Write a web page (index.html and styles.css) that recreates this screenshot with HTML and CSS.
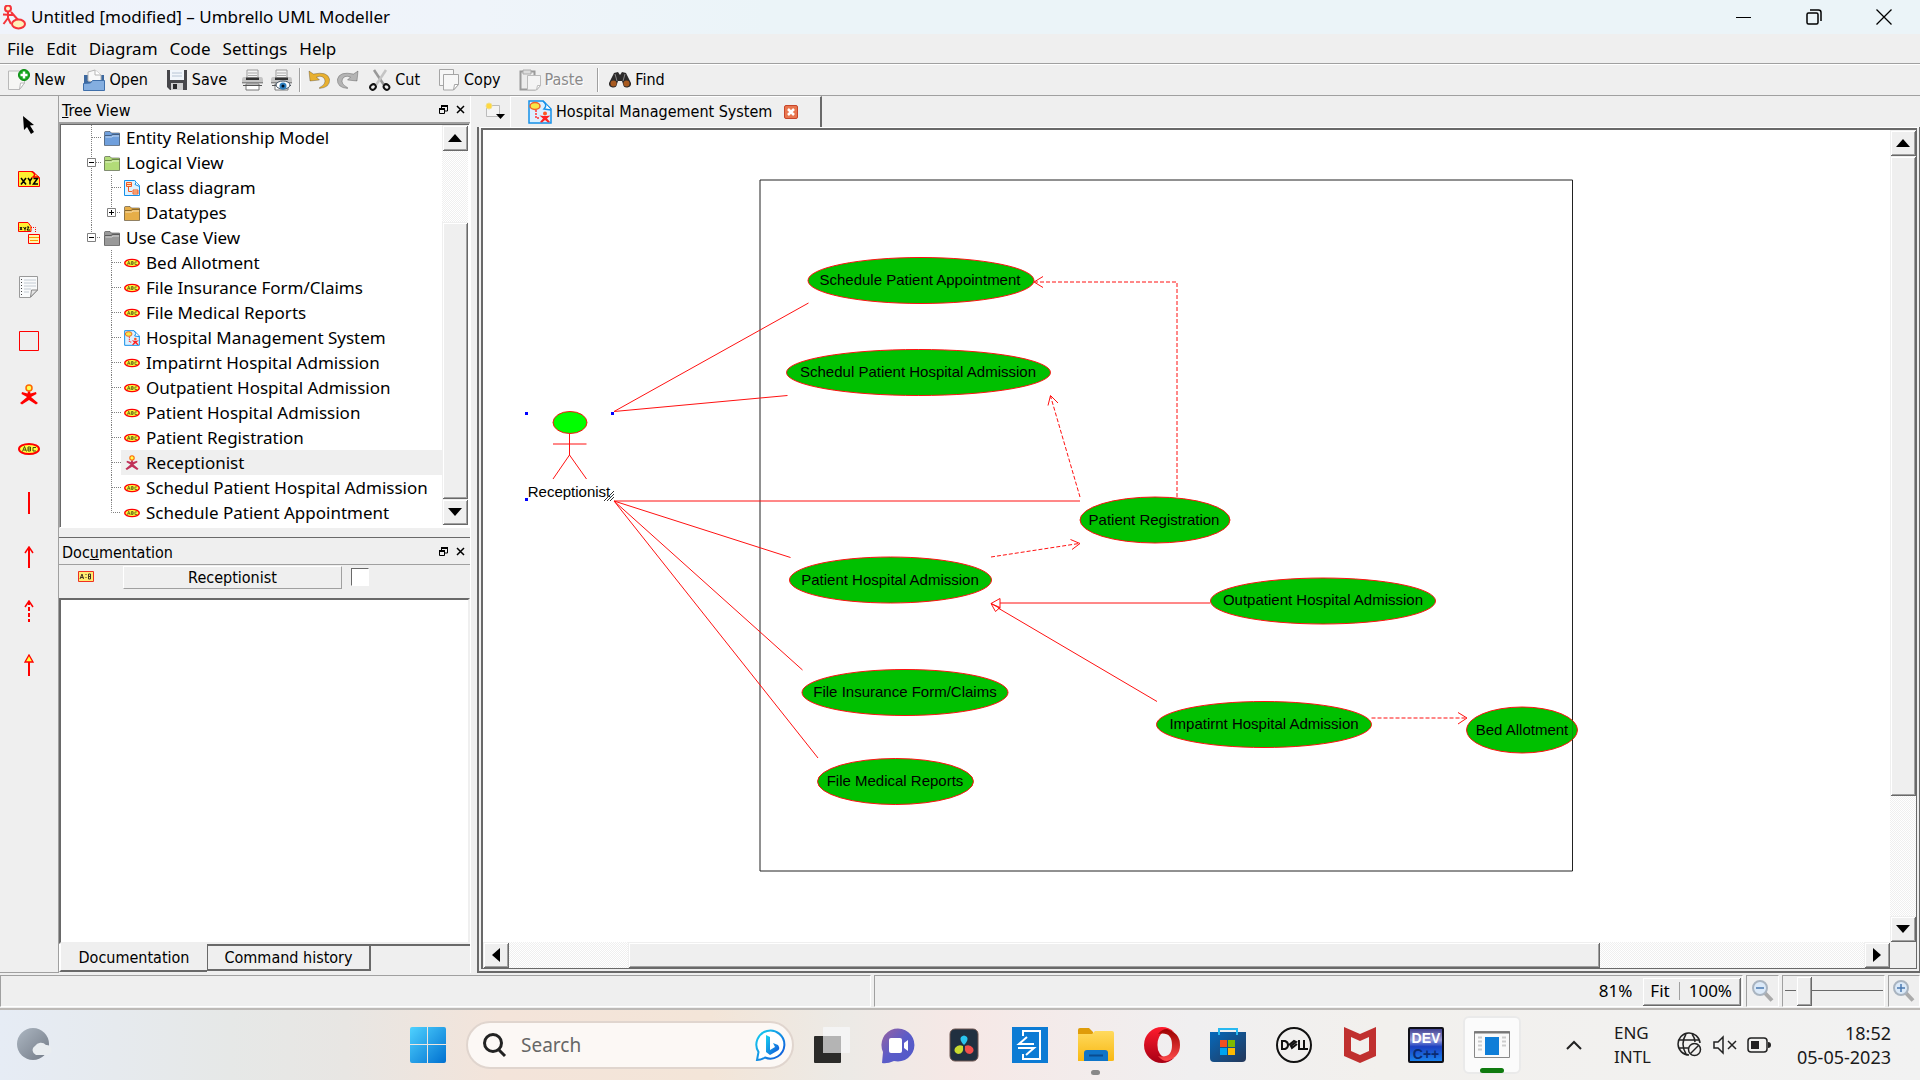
FILE: index.html
```html
<!DOCTYPE html>
<html lang="en">
<head>
<meta charset="utf-8">
<title>Untitled [modified] – Umbrello UML Modeller</title>
<link rel="stylesheet" href="styles.css">
</head>
<body>
<svg class="defs" aria-hidden="true">
  <defs>
    <linearGradient id="gWin" x1="0" y1="0" x2="1" y2="1"><stop offset="0" stop-color="#4fd2ff"/><stop offset="1" stop-color="#0070d0"/></linearGradient>
    <linearGradient id="gFolder" x1="0" y1="0" x2="0" y2="1"><stop offset="0" stop-color="#ffda5e"/><stop offset="1" stop-color="#f8b813"/></linearGradient>
    <linearGradient id="gOpera" x1="0" y1="0" x2="0" y2="1"><stop offset="0" stop-color="#ff1b2d"/><stop offset="1" stop-color="#a70014"/></linearGradient>
    <linearGradient id="gOpera2" x1="0" y1="0" x2="0" y2="1"><stop offset="0" stop-color="#9c0000"/><stop offset="1" stop-color="#ff4b4b"/></linearGradient>
    <linearGradient id="gStore" x1="0" y1="0" x2="1" y2="1"><stop offset="0" stop-color="#0669bb"/><stop offset="1" stop-color="#243759"/></linearGradient>
    <linearGradient id="gChat" x1="0" y1="0" x2="1" y2="1"><stop offset="0" stop-color="#9a62a0"/><stop offset=".5" stop-color="#5b5cc8"/><stop offset="1" stop-color="#5059c9"/></linearGradient>
    <linearGradient id="gMoon" x1="0" y1="0" x2="1" y2="1"><stop offset="0" stop-color="#adb7c2"/><stop offset="1" stop-color="#727a86"/></linearGradient>
    <linearGradient id="gBing" x1="0" y1="0" x2="1" y2="1"><stop offset="0" stop-color="#16d3f0"/><stop offset="1" stop-color="#1150d8"/></linearGradient>
    <linearGradient id="gDev" x1="0" y1="0" x2="0" y2="1"><stop offset="0" stop-color="#3a3a8c"/><stop offset=".35" stop-color="#9a9cd8"/><stop offset=".55" stop-color="#1c3fc0"/><stop offset="1" stop-color="#1a86f0"/></linearGradient>
  </defs>
  <symbol id="folder" viewBox="0 0 16 16"><path d="M.5 2.500a1 1 0 0 1 1-1h4.500l1.500 1.500h7a1 1 0 0 1 1 1V15H.5z" fill="currentColor"/><path d="M.5 5.500H7L8.500 4.500h7V15.500H.5z" fill="currentColor" stroke="#000" stroke-opacity=".4"/><path d="M1.500 7H7.500L9 6h6" stroke="#fff" stroke-opacity=".6" fill="none"/><path d="M.5 5V2.500a1 1 0 0 1 1-1h4.500l1.500 1.500h8V4.500" fill="none" stroke="#000" stroke-opacity=".4"/></symbol>
  <symbol id="usecase" viewBox="0 0 22 12"><ellipse cx="11" cy="6" rx="10" ry="5" fill="#ffff40" stroke="#f00" stroke-width="2"/><path d="M4.500 8.500L6.500 3.500 8.500 8.500M5.500 7H8M10 8V4h2.500v4zM10 6h3M18 4.500h-3v3.500h3" fill="none" stroke="#4a4a10"/></symbol>
  <symbol id="actor" viewBox="0 0 20 22"><circle cx="10" cy="4" r="3" fill="#ff5" stroke="#f60" stroke-width="1.500"/><path d="M9 7.500h2l.5 2L17 8l.5 2-5.500 3 7 6-2 1.500L10 16l-7 4.500L1 19l7-6-5.500-3L3 8l5.500 1.500z" fill="currentColor"/></symbol>
  <symbol id="classdoc" viewBox="0 0 16 16"><path d="M.5.5h10l5 5v10H.5z" fill="#dff2ff" stroke="#1590e8"/><path d="M11 .5q2 2 0 4l4.500 2" fill="#fff" stroke="#1590e8"/><path d="M2.500 2.500h5v4h-5zM9 10h5v4H9z" fill="#ffe0b0" stroke="#f05a28"/><path d="M3 4.500h4M9.500 12H14M4.500 7v4.500H8" stroke="#f05a28" fill="none"/></symbol>
  <symbol id="usedoc" viewBox="0 0 24 24"><path d="M1 1h14l8 8v14H1z" fill="#dcf0ff" stroke="#1590e8" stroke-width="1.500"/><path d="M15 1q5 4 1 8l7 1" fill="#fff" stroke="#1590e8" stroke-width="1.500"/><ellipse cx="7" cy="6" rx="5" ry="3.500" fill="#f6e84a" stroke="#f0642a" stroke-width="1.500"/><path d="M8 10v8h4" stroke="#f33" stroke-width="1.500" stroke-dasharray="2 1" fill="none"/><circle cx="17" cy="13.500" r="2" fill="#f52"/><path d="M11.500 15.500l4 .5h3l4-.5-3.500 3 3 3.500-2 .5-3-2.500-3 2.500-2-.5 3-3.500z" fill="#f22"/></symbol>
  <symbol id="line" viewBox="0 0 20 25"><path d="M10.500 0v25" class="dots"/></symbol>
  <symbol id="tee" viewBox="0 0 20 25"><path d="M10.500 0v25M11 12.500h9" class="dots"/></symbol>
  <symbol id="end" viewBox="0 0 20 25"><path d="M10.500 0v12.500h9" class="dots"/></symbol>
  <symbol id="minus" viewBox="0 0 20 25"><path d="M10.500 0v25M11 12.500h9" class="dots"/><path d="M6.500 8.500h8v8h-8z" fill="#fff" stroke="#808080"/><path d="M8 12.500h5" stroke="#000"/></symbol>
  <symbol id="minusend" viewBox="0 0 20 25"><path d="M10.500 0v12.500h9" class="dots"/><path d="M6.500 8.500h8v8h-8z" fill="#fff" stroke="#808080"/><path d="M8 12.500h5" stroke="#000"/></symbol>
  <symbol id="plus" viewBox="0 0 20 25"><path d="M10.500 0v12.500h9" class="dots"/><path d="M6.500 8.500h8v8h-8z" fill="#fff" stroke="#808080"/><path d="M8 12.500h5M10.500 10v5" stroke="#000"/></symbol>
  <symbol id="float" viewBox="0 0 9 9"><path d="M2.500 3V1h6v5H6" fill="none" stroke="#000"/><path d="M2 1h7" stroke="#000" stroke-width="2"/><path d="M.5 4.500h5v4h-5z" fill="#efefef" stroke="#000"/><path d="M0 4h6" stroke="#000" stroke-width="2"/></symbol>
  <symbol id="cross" viewBox="0 0 9 9"><path d="M1 1l7 7M8 1L1 8" stroke="#000" stroke-width="1.500"/></symbol>
  <symbol id="printer" viewBox="0 0 22 22"><path d="M6 1h11v8H6z" fill="#f4f4f4" stroke="#999"/><path d="M7 4h9M7 6.500h9" stroke="#aaa"/><path d="M3 8h17q2 0 2 3v4H1v-4q0-3 2-3z" fill="#c4c4c4"/><path d="M5 8.500h13v2.500H5z" fill="#333"/><path d="M1 13.500h21" stroke="#888"/><path d="M5 15h13v6H5z" fill="#fff" stroke="#777"/><path d="M2 16.500h19" stroke="#555"/></symbol>
  <symbol id="undo" viewBox="0 0 22 20"><path d="M1 1l1 10 9.500-1-3-3q6-2 8 2 2 5-5 8.500v1q11-1 10-9.500-2-8-16-5z" fill="currentColor" stroke="#000" stroke-opacity=".25"/></symbol>
  <symbol id="loupe" viewBox="0 0 24 24"><path d="M13 13l8 8.500" stroke="#aaa" stroke-width="4"/><circle cx="9" cy="9" r="7" fill="#dbe9f8" stroke="#a9b4c0" stroke-width="2"/><path d="M5 9h8" stroke="#4a78b0" stroke-width="1.500"/></symbol>
</svg>

<header class="titlebar">
  <svg width="24" height="25" viewBox="0 0 24 25"><circle cx="6" cy="3.500" r="3" fill="#fff6c8" stroke="#f5333a" stroke-width="2"/><path d="M6 7v7M1 9.500l10 .5M6 13l-4.500 6M6 13l3 6M9 7l8 9" stroke="#f5333a" stroke-width="2" fill="none"/><ellipse cx="16.500" cy="19" rx="6.500" ry="4.500" fill="#fff0b8" stroke="#f5333a" stroke-width="2"/></svg>
  <h1>Untitled [modified] – Umbrello UML Modeller</h1>
  <div class="wincontrols">
    <button aria-label="Minimize"><svg width="16" height="16"><path d="M0 8.500h15" stroke="#000"/></svg></button>
    <button aria-label="Restore"><svg width="16" height="16" fill="none" stroke="#000" stroke-width="1.500"><rect x="1" y="4" width="11" height="11" rx="1.500"/><path d="M4 1h8.500q2.500 0 2.500 2.500V12"/></svg></button>
    <button aria-label="Close"><svg width="16" height="16"><path d="M.5.5l15 15M15.500.5l-15 15" stroke="#000" stroke-width="1.300"/></svg></button>
  </div>
</header>

<nav class="menubar">
  <button>File</button><button>Edit</button><button>Diagram</button><button>Code</button><button>Settings</button><button>Help</button>
</nav>

<div class="toolbar" role="toolbar">
  <button class="wide"><svg width="22" height="22"><path d="M.5 2h16v12l-5 6.500H.5z" fill="#f6f6f4" stroke="#b9b9b9"/><path d="M16.500 14h-4l-1 6.500z" fill="#fff" stroke="#b9b9b9"/><circle cx="16" cy="6" r="5.500" fill="#14a51c" stroke="#0b8a12"/><path d="M16 2.500v7M12.500 6h7" stroke="#fff" stroke-width="2.500"/></svg>New</button>
  <button class="wide"><svg width="22" height="22"><path d="M1 6h20v15H1z" fill="#3c689f"/><path d="M5 12V3l7-2 6 5v8z" fill="#f8f8f8" stroke="#b5b5b5"/><path d="M12 1v5h6" fill="#fff" stroke="#b5b5b5"/><path d="M.5 21.500v-7l7-.5 2-2.500h12v10z" fill="#84aee0" stroke="#3f6faa"/></svg>Open</button>
  <button class="wide tight"><svg width="22" height="22"><path d="M1 1h20v20H4l-3-3z" fill="#46464a"/><path d="M4 1h14v10H4z" fill="#f1f6fb"/><path d="M6 4h10M6 7h10" stroke="#b6c4d4"/><path d="M5 14h12v7H5z" fill="#cfcfd0"/><path d="M7 15h4v5H7z" fill="#2a2a2c"/></svg>Save</button>
  <button aria-label="Print"><svg width="22" height="22"><use href="#printer"/></svg></button>
  <button aria-label="Print preview"><svg width="22" height="22"><use href="#printer"/><ellipse cx="13" cy="16" rx="7" ry="4" fill="#fff" stroke="#456"/><circle cx="13" cy="17" r="3.500" fill="#2c7fc0"/><circle cx="13" cy="17" r="1.500" fill="#012"/></svg></button>
  <span class="sep"></span>
  <button aria-label="Undo" class="undo"><svg width="22" height="20"><use href="#undo"/></svg></button>
  <button aria-label="Redo" class="redo"><svg width="22" height="20"><use href="#undo" transform="translate(22 0) scale(-1 1)"/></svg></button>
  <button class="wide cut"><svg width="22" height="22" fill="none"><path d="M5 1l10 15" stroke="#999" stroke-width="2.500"/><path d="M17 1L7 16" stroke="#c4c4c4" stroke-width="2.500"/><ellipse cx="4" cy="18" rx="3" ry="2.500" stroke="#111" stroke-width="2" transform="rotate(-40 4 18)"/><ellipse cx="17.500" cy="18" rx="3" ry="2.500" stroke="#111" stroke-width="2" transform="rotate(40 17.500 18)"/></svg>Cut</button>
  <button class="wide"><svg width="22" height="22" fill="#f7f7f7" stroke="#a5a5a5"><path d="M1.500.5h14v16h-14z"/><path d="M5.500 5.500h15v10l-5 5.500h-10z"/><path d="M20.500 15.500h-4l-1 5.500z" fill="#fff"/></svg>Copy</button>
  <button class="wide tight" disabled><svg width="22" height="22"><path d="M1.500 2.500h14v18h-14z" fill="#ececec" stroke="#9a9a9a" stroke-width="2"/><path d="M4 1h8v4H4z" fill="#ddd" stroke="#aaa"/><path d="M8.500 6.500h13v10l-4 4.500h-9z" fill="#f4f4f4" stroke="#bbb"/><path d="M21.500 16.500h-3l-1 4.500z" fill="#fff" stroke="#bbb"/></svg>Paste</button>
  <span class="sep"></span>
  <button class="wide cut"><svg width="22" height="18"><path d="M5 2l4-1 2 3 2-3 4 1 5 10a4 4 0 0 1-8 1l-1-3h-4l-1 3a4 4 0 0 1-8-1z" fill="#2c2a2a"/><circle cx="4.500" cy="12.500" r="3" fill="#a85a20"/><circle cx="17.500" cy="12.500" r="3" fill="#a85a20"/><path d="M6 3l2 7M16 3l-2 7" stroke="#888"/></svg>Find</button>
</div>

<main class="work">
  <aside class="palette">
    <button aria-label="Select"><svg width="14" height="20"><path d="M1 1l11 9-4 .5 4 6.500-3 2-4-7-3 3z"/></svg></button>
    <button aria-label="Note"><svg width="22" height="16"><path d="M.5.5h14l7 6v9H.5z" fill="#ffef30" stroke="#f00"/><path d="M13 0q6 3 2 6h6" fill="none" stroke="#f00" stroke-width="1.500"/><path d="M3 7l5 6.500M8 7l-5 6.500M10 7l2 3 2-3M12 10v3.500M15.500 7.500h4l-4 5.500h4.500" stroke="#000" stroke-width="1.500" fill="none"/></svg></button>
    <button aria-label="Anchor"><svg width="22" height="22"><path d="M1 .5h9l3 4v5H.5v-9z" fill="#ffef30" stroke="#f00"/><path d="M2 5l2 3M4 5L2 8M5.500 5L7 7l1-2M7 7v1.500M9 5h2L9 8h3" stroke="#000" fill="none"/><path d="M13 5.500h4.500V11" fill="none" stroke="#f00" stroke-dasharray="1 1"/><path d="M10.500 12.500h11v9h-11z" fill="#fff8b0" stroke="#f00"/><path d="M11 15.500h10M12 18.500h8" stroke="#f90"/></svg></button>
    <button aria-label="Text"><svg width="20" height="22"><path d="M.5.500h18V14l-7 7.500H.500z" fill="#f9fafb" stroke="#9a9a9a"/><path d="M5 4h12M5 7h12M5 10h12M5 13h7M5 16h5" stroke="#c4ccd4"/><path d="M2.500 3v16" stroke="#444" stroke-dasharray="1 2"/><path d="M18.500 14h-6l-1 7z" fill="#e4e4e4" stroke="#888"/></svg></button>
    <button aria-label="Box"><svg width="20" height="20"><path d="M.5.500h19v19H.500z" fill="none" stroke="#f00"/></svg></button>
    <button aria-label="Actor" class="red"><svg width="20" height="22"><use href="#actor"/></svg></button>
    <button aria-label="Use case"><svg width="22" height="12"><use href="#usecase"/></svg></button>
    <button aria-label="Association"><svg width="10" height="22"><path d="M5 0v22" stroke="#f00" stroke-width="2"/></svg></button>
    <button aria-label="Directed association"><svg width="10" height="22" fill="none" stroke="#f00"><path d="M5 1v21" stroke-width="2"/><path d="M1 7l4-6 4 6" stroke-width="1.500"/></svg></button>
    <button aria-label="Dependency"><svg width="10" height="22" fill="none" stroke="#f00"><path d="M5 1v21" stroke-width="2" stroke-dasharray="4 2"/><path d="M1 7l4-6 4 6" stroke-width="1.500"/></svg></button>
    <button aria-label="Generalization"><svg width="10" height="22" stroke="#f00"><path d="M5 8v14" stroke-width="2"/><path d="M1 8l4-7 4 7z" fill="#ff4" stroke-width="1.300"/></svg></button>
  </aside>

  <div class="docks">
    <section class="dock tree-dock">
      <header class="dock-title"><h2><u>T</u>ree View</h2><button aria-label="Float"><svg width="9" height="9"><use href="#float"/></svg></button><button aria-label="Close"><svg width="9" height="9"><use href="#cross"/></svg></button></header>
      <div class="tree-frame">
        <ul class="tree">
          <li><svg class="g"><use href="#tee"/></svg><svg class="i blue"><use href="#folder"/></svg><span>Entity Relationship Model</span></li>
          <li><svg class="g"><use href="#minus"/></svg><svg class="i green"><use href="#folder"/></svg><span>Logical View</span></li>
          <li><svg class="g"><use href="#line"/></svg><svg class="g"><use href="#tee"/></svg><svg class="i"><use href="#classdoc"/></svg><span>class diagram</span></li>
          <li><svg class="g"><use href="#line"/></svg><svg class="g"><use href="#plus"/></svg><svg class="i amber"><use href="#folder"/></svg><span>Datatypes</span></li>
          <li><svg class="g"><use href="#minusend"/></svg><svg class="i gray"><use href="#folder"/></svg><span>Use Case View</span></li>
          <li><svg class="g"></svg><svg class="g"><use href="#tee"/></svg><svg class="i"><use href="#usecase"/></svg><span>Bed Allotment</span></li>
          <li><svg class="g"></svg><svg class="g"><use href="#tee"/></svg><svg class="i"><use href="#usecase"/></svg><span>File Insurance Form/Claims</span></li>
          <li><svg class="g"></svg><svg class="g"><use href="#tee"/></svg><svg class="i"><use href="#usecase"/></svg><span>File Medical Reports</span></li>
          <li><svg class="g"></svg><svg class="g"><use href="#tee"/></svg><svg class="i"><use href="#usedoc"/></svg><span>Hospital Management System</span></li>
          <li><svg class="g"></svg><svg class="g"><use href="#tee"/></svg><svg class="i"><use href="#usecase"/></svg><span>Impatirnt Hospital Admission</span></li>
          <li><svg class="g"></svg><svg class="g"><use href="#tee"/></svg><svg class="i"><use href="#usecase"/></svg><span>Outpatient Hospital Admission</span></li>
          <li><svg class="g"></svg><svg class="g"><use href="#tee"/></svg><svg class="i"><use href="#usecase"/></svg><span>Patient Hospital Admission</span></li>
          <li><svg class="g"></svg><svg class="g"><use href="#tee"/></svg><svg class="i"><use href="#usecase"/></svg><span>Patient Registration</span></li>
          <li><svg class="g"></svg><svg class="g"><use href="#tee"/></svg><div class="selected"><svg class="i plum"><use href="#actor"/></svg><span>Receptionist</span></div></li>
          <li><svg class="g"></svg><svg class="g"><use href="#tee"/></svg><svg class="i"><use href="#usecase"/></svg><span>Schedul Patient Hospital Admission</span></li>
          <li><svg class="g"></svg><svg class="g"><use href="#end"/></svg><svg class="i"><use href="#usecase"/></svg><span>Schedule Patient Appointment</span></li>
        </ul>
        <div class="scroll vertical">
          <button aria-label="Scroll up"><svg width="14" height="8"><path d="M0 8L7 0l7 8z"/></svg></button>
          <div class="track tree-before"></div><div class="thumb tree-thumb"></div>
          <button aria-label="Scroll down"><svg width="14" height="8"><path d="M0 0l7 8 7-8z"/></svg></button>
        </div>
      </div>
    </section>

    <section class="dock doc-dock">
      <header class="dock-title"><h2>Doc<u>u</u>mentation</h2><button aria-label="Float"><svg width="9" height="9"><use href="#float"/></svg></button><button aria-label="Close"><svg width="9" height="9"><use href="#cross"/></svg></button></header>
      <div class="doc-head">
        <svg width="16" height="11"><path d="M.500.500h15v10H.500z" fill="#ffec70" stroke="#f03020"/><path d="M2 8l2-5 1.500 5M2.500 6.500h3M8 3v1M8 6v1M10.500 3h2v5h-2zM10.500 5.500h2.500" stroke="#432" fill="none"/></svg>
        <button>Receptionist</button>
        <input type="checkbox" aria-label="Modified">
      </div>
      <textarea class="doc-text" aria-label="Documentation text"></textarea>
      <div class="doc-tabs"><button class="on">Documentation</button><button class="off">Command history</button><span></span></div>
    </section>
  </div>

  <section class="editor">
    <div class="tabs">
      <button class="newtab" aria-label="New diagram"><svg width="20" height="18"><path d="M1.500 3.500h13v11h-13z" fill="#f4f4f4" stroke="#bbb"/><circle cx="4" cy="4" r="3" fill="#ffd840" stroke="#f0e090"/><path d="M11 12h9l-4.500 5z"/></svg></button>
      <div class="tab"><svg width="24" height="24"><use href="#usedoc"/></svg><span>Hospital Management System</span><button aria-label="Close tab"><svg width="14" height="14"><rect x=".5" y=".5" width="13" height="13" rx="1.500" fill="#e8764f" stroke="#c8452a"/><path d="M4 4l6 6M10 4l-6 6" stroke="#fff" stroke-width="2.500"/></svg></button></div>
    </div>
    <div class="pane">
      <div class="view">
        <div class="canvas">
          <svg class="diagram" role="img" aria-label="Use case diagram">
            <g transform="translate(-483 -130)">
              <path d="M760 180H1572.500V871H760z" fill="none" stroke="#222"/>
              <g class="wire">
                <path d="M808.500 303L614 411.500M787.500 395.500L614 411.500M614 501H1080M614 501L790.500 557.500M614 501L802.500 670M614 501L818 758"/>
                <path class="dash" d="M1177 497V282H1035"/><path d="M1043 276.500l-9 5.500 9 5.500"/>
                <path class="dash" d="M1080 497L1050.500 396"/><path d="M1048 405.500l2.500-10 7.500 7.500"/>
                <path class="dash" d="M991 557L1079 543.500"/><path d="M1070.500 539.500l9.500 4-8 6"/>
                <path class="dash" d="M1371.500 718H1466"/><path d="M1458 712.500l9 5.500-9 6"/>
                <path d="M1210 603H1000M1157 701.500L998 608M991 603.500l9-5v10zM991 603.500l9 4-4.500 4z"/>
              </g>
              <g class="nodes">
                <ellipse cx="921" cy="280.500" rx="113" ry="23"/><ellipse cx="918.500" cy="372.500" rx="132" ry="23"/>
                <ellipse cx="1155" cy="520" rx="75" ry="23"/><ellipse cx="890.500" cy="580" rx="101" ry="23"/>
                <ellipse cx="1323" cy="601" rx="112.500" ry="23"/><ellipse cx="905" cy="692.500" rx="103" ry="23"/>
                <ellipse cx="1264" cy="724.500" rx="107.500" ry="23"/><ellipse cx="1522" cy="730" rx="55.500" ry="23"/>
                <ellipse cx="895.500" cy="781.500" rx="78" ry="23"/>
              </g>
              <path d="M1572.500 719V741" stroke="#222" stroke-opacity=".3"/>
              <g class="labels">
                <text x="920" y="285">Schedule Patient Appointment</text><text x="918" y="377">Schedul Patient Hospital Admission</text>
                <text x="1154" y="525">Patient Registration</text><text x="890" y="585">Patient Hospital Admission</text>
                <text x="1323" y="605">Outpatient Hospital Admission</text><text x="905" y="697">File Insurance Form/Claims</text>
                <text x="1264" y="729">Impatirnt Hospital Admission</text><text x="1522" y="735">Bed Allotment</text>
                <text x="895" y="786">File Medical Reports</text><text x="569" y="497">Receptionist</text>
              </g>
              <g class="wire"><ellipse cx="570" cy="422.500" rx="17" ry="11" fill="#0f0"/><path d="M569.500 434v21M553 444h33.500M569.500 455L553 479M569.500 455l17 24"/></g>
              <path d="M525 412h3v3h-3zM611 412h3v3h-3zM525 498h3v3h-3z" fill="#00f"/>
              <path d="M604 501l10-10M607 501l7-7M610 501l4-4" stroke="#333"/>
            </g>
          </svg>
          <div class="scroll vertical">
            <button aria-label="Scroll up"><svg width="14" height="8"><path d="M0 8L7 0l7 8z"/></svg></button>
            <div class="thumb v-thumb"></div><div class="track v-after"></div>
            <button aria-label="Scroll down"><svg width="14" height="8"><path d="M0 0l7 8 7-8z"/></svg></button>
          </div>
        </div>
        <div class="scroll horizontal">
          <button aria-label="Scroll left"><svg width="8" height="14"><path d="M8 0L0 7l8 7z"/></svg></button>
          <div class="track h-before"></div><div class="thumb h-thumb"></div><div class="track h-after"></div>
          <button aria-label="Scroll right"><svg width="8" height="14"><path d="M0 0l8 7-8 7z"/></svg></button>
          <span class="corner"></span>
        </div>
      </div>
    </div>
  </section>
</main>

<footer class="status">
  <div class="cell message"></div>
  <div class="cell zoomcell"><span>81%</span><div class="zoombtns"><button>Fit</button><i></i><button>100%</button></div></div>
  <button class="cell loupe" aria-label="Zoom out"><svg width="24" height="24"><use href="#loupe"/></svg></button>
  <div class="cell slide"><input type="range" min="0" max="100" value="14" aria-label="Zoom"></div>
  <button class="cell loupe last" aria-label="Zoom in"><svg width="24" height="24"><use href="#loupe"/><path d="M9 5v8" stroke="#4a78b0" stroke-width="1.500"/></svg></button>
</footer>

<div class="taskbar">
  <button class="weather" aria-label="Weather"><svg width="36" height="34"><circle cx="16" cy="16" r="16" fill="url(#gMoon)"/><path d="M19 27a5 5 0 0 1-1-9 7 7 0 0 1 11-1 5 5 0 0 1 1 10z" fill="#e9edf0"/></svg></button>
  <div class="apps">
    <button class="app" aria-label="Start"><svg width="36" height="36" fill="url(#gWin)"><path d="M0 2q0-2 2-2h15v17H0zM18 0h16q2 0 2 2v15H18zM0 18h17v18H2q-2 0-2-2zM18 18h18v16q0 2-2 2H18z"/></svg></button>
    <div class="search"><svg width="24" height="26" fill="none" stroke="#222" stroke-width="3"><circle cx="10" cy="11" r="8.500"/><path d="M16 18l6 6"/></svg><input type="text" placeholder="Search" aria-label="Search"><svg width="32" height="36"><path d="M2 33l1.500-8A14 14 0 1 1 10 30.500Q6 33 2 33z" fill="#fff" stroke="url(#gBing)" stroke-width="2"/><path d="M11 8l4 2v13l5-3-2-4 5 2q3 4-1 6l-7 4-4-3z" fill="url(#gBing)"/></svg></div>
    <button class="app" aria-label="Task view"><svg width="36" height="38"><rect x="0" y="10" width="27" height="27" rx="1" fill="#2b2b29"/><rect x="9" y="1" width="27" height="26" rx="1" fill="#f4f4f4" fill-opacity=".95"/><path d="M9 10h18v17H9z" fill="#b4b4b4"/></svg></button>
    <button class="app" aria-label="Chat"><svg width="34" height="38"><path d="M1 37l1-11A16.500 16.500 0 1 1 13 35Q6 38 1 37z" fill="url(#gChat)"/><rect x="8" y="12" width="13" height="15" rx="2" fill="#fff"/><path d="M23 17l4-3v11l-4-3z" fill="#fff"/></svg></button>
    <button class="app" aria-label="DaVinci Resolve"><svg width="30" height="34"><rect x="1" y="1" width="28" height="32" rx="5" fill="#203040" stroke="#6d5550"/><path d="M15 17q-5-5-3-8 3-3 6 0 2 3-3 8z" fill="#2ac4ee"/><path d="M14 18q1 8-5 8-5-2-3-6 3-4 8-2z" fill="#c8dc30"/><path d="M16 18q-1 8 5 8 5-2 3-6-3-4-8-2z" fill="#f0504c"/></svg></button>
    <button class="app" aria-label="Transfer"><svg width="36" height="36"><path d="M0 0h36v36H0z" fill="#0c7bd4"/><path d="M11 9V4h17v28H11v-5M22 17H7l8-7M6 21h16l-8 7" fill="none" stroke="#fff" stroke-width="2"/></svg></button>
    <button class="app running" aria-label="File Explorer"><svg width="36" height="34"><path d="M0 2q0-2 2-2h9l4 4v5H0z" fill="#df9c0a"/><path d="M0 6h14l3-3h17q2 0 2 2v27q0 1-2 1H0z" fill="url(#gFolder)"/><path d="M6 33v-8q0-3 3-3h18q3 0 3 3v8z" fill="#0f74c8"/><path d="M11 27.500h14" stroke="#0a4c90" stroke-width="2"/></svg></button>
    <button class="app" aria-label="Opera"><svg width="36" height="36"><path d="M18 0a18 18 0 1 0 0 36q7 0 12-5-12 3-16-8-2-10 3-16 6-6 13-2Q25 0 18 0z" fill="url(#gOpera)"/><path d="M14 7q4-5 9-5 13 4 13 16T23 34q-5 0-9-5 14 3 14-11T14 7z" fill="url(#gOpera2)"/></svg></button>
    <button class="app" aria-label="Store"><svg width="36" height="36"><path d="M9 8V2h18v6" fill="none" stroke="#28b8f0" stroke-width="2"/><path d="M0 5h36v26q0 4-4 4H4q-4 0-4-4z" fill="url(#gStore)"/><path d="M9 8V5M27 8V5" stroke="#28b8f0" stroke-width="2"/><path d="M10 13h7v7h-7z" fill="#f25022"/><path d="M18 13h7v7h-7z" fill="#7fba00"/><path d="M10 21h7v7h-7z" fill="#00a4ef"/><path d="M18 21h7v7h-7z" fill="#ffb900"/></svg></button>
    <button class="app" aria-label="Dell"><svg width="36" height="36"><circle cx="18" cy="18" r="17" fill="none" stroke="#111" stroke-width="2"/><path d="M6 14v8h3q3-1 3-4t-3-4zM23 13v9h4M28 13v9h4M13 18l5-4 2 1-5 4 1 2 5-4" fill="none" stroke="#111" stroke-width="2"/></svg></button>
    <button class="app" aria-label="McAfee"><svg width="32" height="36"><path d="M0 0l16 7L32 0v29l-16 7-16-7zM7 10v14l9 4 9-4V10l-9 4z" fill="#c0302f" fill-rule="evenodd"/></svg></button>
    <button class="app" aria-label="Dev-C++"><svg width="36" height="36"><rect x="1" y="1" width="34" height="34" rx="1" fill="url(#gDev)" stroke="#101018" stroke-width="2"/><text x="18" y="16" class="dev">DEV</text><text x="18" y="32" class="cpp">C++</text></svg></button>
    <button class="app active" aria-label="Umbrello"><svg width="36" height="28"><path d="M.500.500h35v26H.500z" fill="#fafafa" stroke="#888"/><path d="M0 1.500h36" stroke="#777" stroke-width="2"/><path d="M11 6h14v18H11z" fill="#0f7ed8"/><path d="M4 6.500h4M4 10.500h4M4 14.500h4M4 18.500h4M28 6.500h4M28 10.500h4M28 14.500h4" stroke="#ccc" stroke-width="2"/></svg></button>
  </div>
  <div class="tray">
    <svg width="16" height="10"><path d="M1 9l7-7 7 7" fill="none" stroke="#222" stroke-width="2"/></svg>
    <div class="lang">ENG<br>INTL</div>
    <div class="net">
      <svg width="26" height="26" fill="none" stroke="#222" stroke-width="1.500"><path d="M23 11a11 11 0 1 0-11 12M9 22Q3 12 9 2M15 2q3 4 3 8M2 8h20M2 16h9"/><circle cx="17.500" cy="17.500" r="6"/><path d="M13.500 21.500l8-8"/></svg>
      <svg width="24" height="20" fill="none" stroke="#222" stroke-width="1.500"><path d="M1 7h4l5-5v16l-5-5H1zM15 6l8 8M23 6l-8 8"/></svg>
      <svg width="24" height="16"><rect x="1" y="1" width="19" height="14" rx="3" fill="none" stroke="#222" stroke-width="1.500"/><path d="M4 4h8v8H4zM21 5q3 0 3 3t-3 3z" fill="#222"/></svg>
    </div>
    <div class="clock">18:52<br>05-05-2023</div>
  </div>
</div>
</body>
</html>
```
FILE: styles.css
```css
:root {
  --face: #efefef;
  --mid: #a0a0a0;
  --dark: #696969;
  --raised: inset 1px 1px #efefef, inset -1px -1px #696969, inset 2px 2px #fff, inset -2px -2px #a0a0a0;
  --ui: "Noto Sans", "Open Sans", sans-serif;
  --compact: "DejaVu Sans Condensed", "DejaVu Sans", sans-serif;
}
* { box-sizing: border-box; }
body {
  margin: 0;
  height: 100vh;
  display: flex;
  flex-direction: column;
  overflow: hidden;
  background: var(--face);
  color: #000;
  font: 17px/24px var(--ui);
}
button { border: 0; padding: 0; background: none; color: inherit; font: inherit; display: flex; align-items: center; justify-content: center; flex: none; }
svg { display: block; flex: none; }
h1, h2, ul { margin: 0; padding: 0; font: inherit; }
.defs { position: absolute; width: 0; height: 0; }
.dots { fill: none; stroke: #808080; stroke-dasharray: 1 1; }

.titlebar { flex: none; height: 34px; display: flex; align-items: center; gap: 5px; padding-left: 2px; background: linear-gradient(90deg, #eff3fb, #eff4fa 25%, #ebf4f8 40%, #ebf4f8); }
.titlebar h1 { flex: 1; }
.wincontrols { display: flex; padding-right: 1px; }
.wincontrols button { width: 70px; height: 32px; }

.menubar { flex: none; height: 29px; display: flex; align-items: center; gap: 12px; padding-left: 7px; }
.toolbar { flex: none; height: 33px; display: flex; align-items: center; gap: 1px; padding-left: 5px; border: solid var(--mid); border-width: 1px 0; box-shadow: inset 0 1px #fff; font: 16px/24px var(--compact); }
.toolbar button { height: 28px; gap: 4px; padding: 0 3px; }
.toolbar .wide { padding-right: 14px; }
.toolbar .tight { padding-right: 10px; }
.toolbar .cut { padding-left: 6px; }
.toolbar button:disabled { color: #8a8a8a; text-shadow: 1px 1px #fff; }
.toolbar .undo { color: #e8b030; }
.toolbar .redo { color: #b4b4b4; }
.sep { width: 2px; height: 24px; margin: 0 3px; border-left: 1px solid var(--mid); border-right: 1px solid #fff; }

.work { flex: 1; min-height: 0; display: flex; }
.palette { flex: none; width: 59px; padding-top: 2px; border-right: 1px solid var(--mid); border-bottom: 1px solid var(--mid); }
.palette button { width: 58px; height: 54px; }
.red { color: #f00; }

.docks { flex: none; width: 412px; display: flex; flex-direction: column; gap: 9px; border-right: 1px solid #fff; }
.dock { display: flex; flex-direction: column; min-height: 0; font: 16px/24px var(--compact); }
.dock-title { flex: none; height: 27px; display: flex; align-items: center; padding: 0 1px 0 3px; border-bottom: 1px solid var(--mid); }
.dock-title h2 { flex: 1; padding-top: 3px; }
.dock-title button { width: 17px; height: 17px; }
.tree-frame { display: flex; border: 1px solid; border-color: var(--mid) #fff #fff var(--mid); box-shadow: inset 1px 1px var(--dark); padding: 1px 1px 2px 1px; background: #fff; }
.tree { flex: 1; list-style: none; padding-left: 20px; font: 17px/24px var(--ui); }
.tree li { height: 25px; display: flex; align-items: center; white-space: nowrap; }
.g { width: 20px; height: 25px; }
.i { width: 16px; height: 16px; margin: 0 6px 0 3px; }
.selected { flex: 1; height: 25px; display: flex; align-items: center; background: var(--face); }
.blue { color: #6f9fdc; }
.green { color: #b2dc78; }
.amber { color: #e6ae48; }
.gray { color: #999; }
.plum { color: #c03058; }

.scroll { flex: none; display: flex; background: var(--face); }
.vertical { width: 26px; flex-direction: column; }
.horizontal { height: 26px; }
.scroll button { width: 26px; height: 26px; background: var(--face); box-shadow: var(--raised); }
.track { background: repeating-conic-gradient(#fff 0 25%, #efefef 0 50%) 0 0 / 2px 2px; }
.thumb { box-shadow: var(--raised); background: var(--face); }
.tree-before { flex: 71; }
.tree-thumb { flex: 279; }
.v-thumb { flex: 642; }
.v-after { flex: 120; }
.h-before { flex: 119; }
.h-thumb { flex: 972; }
.h-after { flex: 264; }
.corner { width: 26px; }

.doc-dock { flex: 1; border-top: 1px solid var(--dark); }
.doc-head { flex: none; height: 33px; display: flex; align-items: flex-start; padding-top: 1px; }
.doc-head > svg { margin: 5px 29px 0 19px; }
.doc-head button { width: 219px; height: 23px; border: 1px solid; border-color: #fff var(--mid) var(--mid) #fff; }
.doc-head input { appearance: none; width: 18px; height: 18px; margin: 2px 9px; background: #fff; border: 1px solid; border-color: var(--dark) #fff #fff var(--dark); }
.doc-text { flex: 1; width: 100%; resize: none; outline: 0; border: 2px solid; border-color: var(--dark) var(--face) var(--face) var(--dark); background: #fff; }
.doc-tabs { flex: none; height: 29px; display: flex; align-items: flex-start; }
.doc-tabs button { height: 27px; }
.doc-tabs .on { width: 148px; height: 28px; padding-top: 2px; border: solid; border-color: #fff #fff var(--dark) #fff; border-width: 0 0 2px 2px; }
.doc-tabs .off { width: 164px; border: 2px solid var(--dark); border-left-width: 1px; }
.doc-tabs span { flex: 1; border-top: 2px solid var(--dark); }

.editor { flex: 1; min-width: 0; display: flex; flex-direction: column; padding-left: 6px; font: 16px/24px var(--compact); }
.tabs { flex: none; height: 31px; display: flex; }
.newtab { width: 33px; padding: 0 3px 2px 6px; }
.tab { display: flex; align-items: center; gap: 4px; width: 312px; padding-left: 17px; border-top: 1px solid #fff; border-left: 1px solid #fff; border-right: 2px solid var(--dark); }
.tab span { flex: 1; }
.tab button { margin-right: 22px; }
.pane { flex: 1; min-height: 0; display: flex; padding: 1px 2px 2px 2px; border: solid; border-width: 0 1px 2px 2px; border-color: #fff var(--dark) var(--dark) var(--dark); box-shadow: inset 0 1px #fff; }
.view { flex: 1; display: flex; flex-direction: column; min-width: 0; border: solid var(--dark); border-width: 2px 1px 1px 2px; background: #fff; }
.canvas { flex: 1; min-height: 0; display: flex; }
.diagram { flex: 1; min-width: 0; height: 100%; overflow: hidden; }
.wire { fill: none; stroke: #f11; }
.dash { stroke-dasharray: 4 2; }
.nodes { fill: #00c000; stroke: #f11; }
.labels { font: 15px "Liberation Sans", Arial, sans-serif; text-anchor: middle; }

.status { flex: none; height: 35px; display: flex; gap: 3px; padding: 2px 0 1px; }
.cell { height: 32px; display: flex; align-items: center; justify-content: center; border: 1px solid; border-color: var(--mid) #fff #fff var(--mid); }
.message { flex: 871; }
.zoomcell { flex: 869; justify-content: flex-end; gap: 10px; padding-right: 1px; }
.zoombtns { display: flex; align-items: center; height: 29px; gap: 9px; padding: 0 9px 0 8px; box-shadow: var(--raised); }
.zoombtns i { width: 1px; height: 18px; background: var(--mid); }
.loupe { width: 33px; }
.last { width: 32px; }
.slide { width: 103px; }
.slide input { appearance: none; width: 98px; height: 30px; margin: 0; background: linear-gradient(var(--dark), var(--dark)) 0 14px / 100% 1px no-repeat; }
.slide input::-webkit-slider-thumb { appearance: none; width: 16px; height: 30px; background: var(--face); box-shadow: var(--raised); }

.taskbar { flex: none; height: 72px; display: grid; grid-template-columns: 1fr auto 1fr; align-items: center; border-top: 2px solid #bcb9b6; background: linear-gradient(90deg, #e6ecf5, #e6e8e7 12%, #e8e6e3 18%, #f3e4da 26%, #f3e5d8 37%, #eceae6 44%, #f6e8e6 50%, #f0eff0 62%, #f2f0ed 72%, #f2f2f2); }
.weather { justify-self: start; margin-left: 17px; }
.apps { display: flex; align-items: center; }
.app { width: 66px; height: 58px; position: relative; }
.search { width: 328px; height: 48px; margin: 0 5px; padding: 0 5px 0 15px; display: flex; align-items: center; gap: 14px; border: 2px solid #e0d5ce; border-radius: 24px; background: #fcf8f5; }
.search input { flex: 1; min-width: 0; border: 0; padding: 0; outline: 0; background: none; font: 19px/24px var(--ui); }
.search input::placeholder { color: #666; opacity: 1; }
.running::after, .active::after { content: ""; position: absolute; bottom: -1px; left: 28px; width: 9px; height: 5px; border-radius: 3px; background: #888; }
.active { width: 58px; margin: 0 4px; border: 2px solid #eaeaea; border-radius: 6px; background: #fbfbfb; }
.active::after { left: 15px; width: 24px; background: #0f7b0f; }
.dev { font: bold 14px "Liberation Sans", Arial, sans-serif; fill: #fff; text-anchor: middle; }
.cpp { font: bold 14px "Liberation Sans", Arial, sans-serif; fill: #0a2a70; text-anchor: middle; }
.tray { justify-self: end; display: flex; align-items: center; padding-right: 29px; color: #1a1a1a; }
.lang { margin: 0 26px 0 32px; }
.net { display: flex; align-items: center; gap: 10px; }
.clock { margin-left: 26px; text-align: right; font-size: 18px; }
```
